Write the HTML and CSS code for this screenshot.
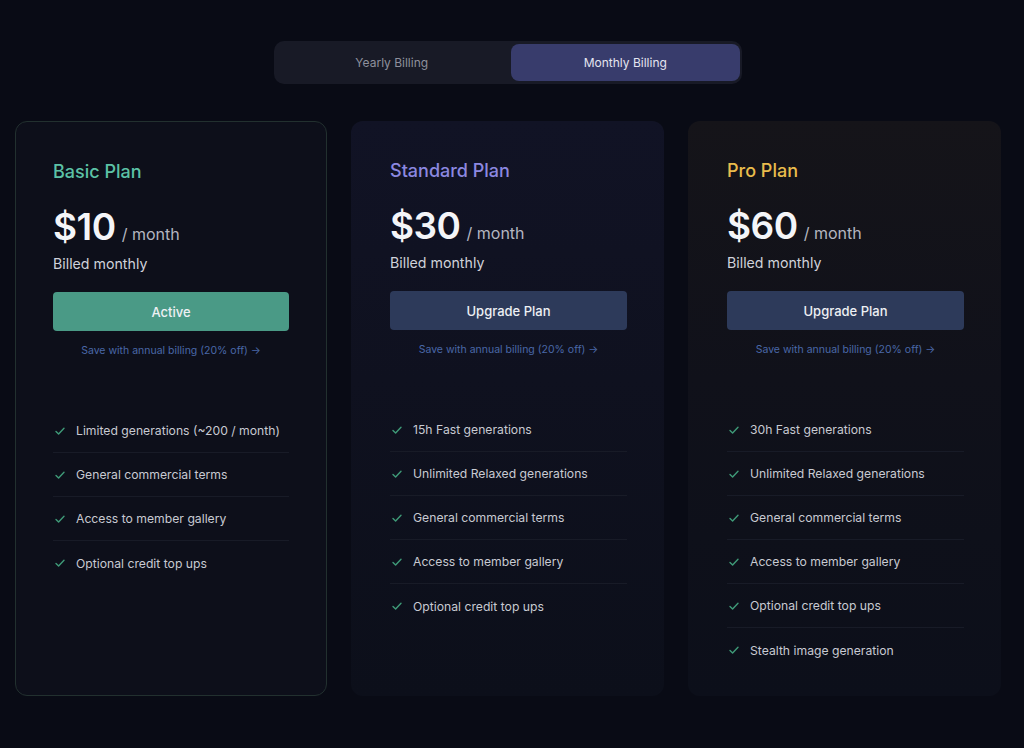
FILE: index.html
```html
<!DOCTYPE html>
<html lang="en">
<head>
<meta charset="utf-8">
<title>Pricing</title>
<link rel="stylesheet" href="styles.css">
</head>
<body>
<div class="page">
  <div class="toggle-row">
    <div class="toggle">
      <div class="toggle-opt">Yearly Billing</div>
      <div class="toggle-opt active">Monthly Billing</div>
    </div>
  </div>
  <div class="cards">
    <div class="card card-basic">
      <div class="card-head">
        <div class="plan-name basic">Basic Plan</div>
        <div class="price"><span class="amount">$10</span><span class="per">/ month</span></div>
        <div class="billed">Billed monthly</div>
        <div class="btn btn-active">Active</div>
        <div class="save">Save with annual billing (20% off) →</div>
      </div>
      <ul class="features">
        <li><svg class="check" viewBox="0 0 12 12"><path d="M2 6.4 4.6 9 10 3.2"/></svg>Limited generations (~200 / month)</li>
        <li><svg class="check" viewBox="0 0 12 12"><path d="M2 6.4 4.6 9 10 3.2"/></svg>General commercial terms</li>
        <li><svg class="check" viewBox="0 0 12 12"><path d="M2 6.4 4.6 9 10 3.2"/></svg>Access to member gallery</li>
        <li><svg class="check" viewBox="0 0 12 12"><path d="M2 6.4 4.6 9 10 3.2"/></svg>Optional credit top ups</li>
      </ul>
    </div>
    <div class="card card-standard">
      <div class="card-head">
        <div class="plan-name standard">Standard Plan</div>
        <div class="price"><span class="amount">$30</span><span class="per">/ month</span></div>
        <div class="billed">Billed monthly</div>
        <div class="btn btn-upgrade">Upgrade Plan</div>
        <div class="save">Save with annual billing (20% off) →</div>
      </div>
      <ul class="features">
        <li><svg class="check" viewBox="0 0 12 12"><path d="M2 6.4 4.6 9 10 3.2"/></svg>15h Fast generations</li>
        <li><svg class="check" viewBox="0 0 12 12"><path d="M2 6.4 4.6 9 10 3.2"/></svg>Unlimited Relaxed generations</li>
        <li><svg class="check" viewBox="0 0 12 12"><path d="M2 6.4 4.6 9 10 3.2"/></svg>General commercial terms</li>
        <li><svg class="check" viewBox="0 0 12 12"><path d="M2 6.4 4.6 9 10 3.2"/></svg>Access to member gallery</li>
        <li><svg class="check" viewBox="0 0 12 12"><path d="M2 6.4 4.6 9 10 3.2"/></svg>Optional credit top ups</li>
      </ul>
    </div>
    <div class="card card-pro">
      <div class="card-head">
        <div class="plan-name pro">Pro Plan</div>
        <div class="price"><span class="amount">$60</span><span class="per">/ month</span></div>
        <div class="billed">Billed monthly</div>
        <div class="btn btn-upgrade">Upgrade Plan</div>
        <div class="save">Save with annual billing (20% off) →</div>
      </div>
      <ul class="features">
        <li><svg class="check" viewBox="0 0 12 12"><path d="M2 6.4 4.6 9 10 3.2"/></svg>30h Fast generations</li>
        <li><svg class="check" viewBox="0 0 12 12"><path d="M2 6.4 4.6 9 10 3.2"/></svg>Unlimited Relaxed generations</li>
        <li><svg class="check" viewBox="0 0 12 12"><path d="M2 6.4 4.6 9 10 3.2"/></svg>General commercial terms</li>
        <li><svg class="check" viewBox="0 0 12 12"><path d="M2 6.4 4.6 9 10 3.2"/></svg>Access to member gallery</li>
        <li><svg class="check" viewBox="0 0 12 12"><path d="M2 6.4 4.6 9 10 3.2"/></svg>Optional credit top ups</li>
        <li><svg class="check" viewBox="0 0 12 12"><path d="M2 6.4 4.6 9 10 3.2"/></svg>Stealth image generation</li>
      </ul>
    </div>
  </div>
</div>
</body>
</html>
```

FILE: styles.css
```css
* { box-sizing: border-box; }
html, body { margin: 0; padding: 0; }
body {
  background: #090b15;
  font-family: Inter, "Noto Sans", sans-serif;
  color: #d8dae2;
  width: 1024px;
  height: 748px;
  overflow: hidden;
}
.page {
  padding: 41px 23px 0 15px;
}
.toggle-row {
  display: flex;
  padding-left: 259px;
}
.toggle {
  width: 468px;
  height: 43px;
  background: #181a26;
  border-radius: 10px;
  padding: 3px 2px 3px 3px;
  display: flex;
  gap: 4px;
}
.toggle-opt {
  flex: 1;
  display: flex;
  align-items: center;
  justify-content: center;
  font-size: 12px;
  color: #8e909c;
  border-radius: 8px;
}
.toggle-opt.active {
  background: #383c6c;
  color: #e4e5f0;
}
.cards {
  margin-top: 37px;
  display: grid;
  grid-template-columns: 312px 313px 313px;
  column-gap: 24px;
  height: 575px;
}
.card {
  border-radius: 12px;
  background: #0d0f1a;
  padding: 0 38px;
  display: flex;
  flex-direction: column;
}
.card-basic {
  border: 1px solid #22302f;
  padding: 0 37px;
}
.card-standard {
  background: linear-gradient(180deg, #111325 0%, #0f111f 45%, #0c0f1a 100%);
  padding: 0 37px 0 39px;
}
.card-pro {
  background: linear-gradient(180deg, #151419 0%, #10111a 45%, #0c0f1a 100%);
  padding: 0 37px 0 39px;
}
.card-head {
  padding-top: 38px;
}
.plan-name {
  font-size: 18px;
  font-weight: 500;
  line-height: 24px;
}
.basic { color: #5cc2a6; }
.standard { color: #8c88e0; }
.pro { color: #e9bc4c; }
.price {
  margin-top: 20px;
  display: flex;
  align-items: baseline;
  gap: 6px;
  height: 44px;
}
.amount {
  font-size: 37px;
  font-weight: 600;
  color: #f4f5f8;
  letter-spacing: -0.5px;
}
.per {
  font-size: 16px;
  color: #b4b6c0;
}
.billed {
  margin-top: 7px;
  font-size: 14.2px;
  color: #d0d2da;
}
.btn {
  margin-top: 20px;
  height: 39px;
  border-radius: 4px;
  display: flex;
  align-items: center;
  justify-content: center;
  font-size: 13px;
  font-weight: 500;
  color: #eef0f4;
}
.btn-active { background: #4a9a86; }
.btn-upgrade { background: #2d3a5a; }
.save {
  margin-top: 13px;
  text-align: center;
  font-size: 10.5px;
  color: #4a68a8;
}
.features {
  list-style: none;
  margin: 52px 0 0;
  padding: 0;
}
.features li {
  height: 44px;
  display: flex;
  align-items: center;
  font-size: 12.2px;
  color: #c8cad2;
  border-bottom: 1px solid #181b27;
  white-space: nowrap;
}
.features li:last-child { border-bottom: none; }
.check {
  width: 12px;
  height: 12px;
  margin: 0 10px 0 1px;
  flex: none;
  fill: none;
  stroke: #3f9a78;
  stroke-width: 1.4;
  stroke-linecap: round;
  stroke-linejoin: round;
}
```
